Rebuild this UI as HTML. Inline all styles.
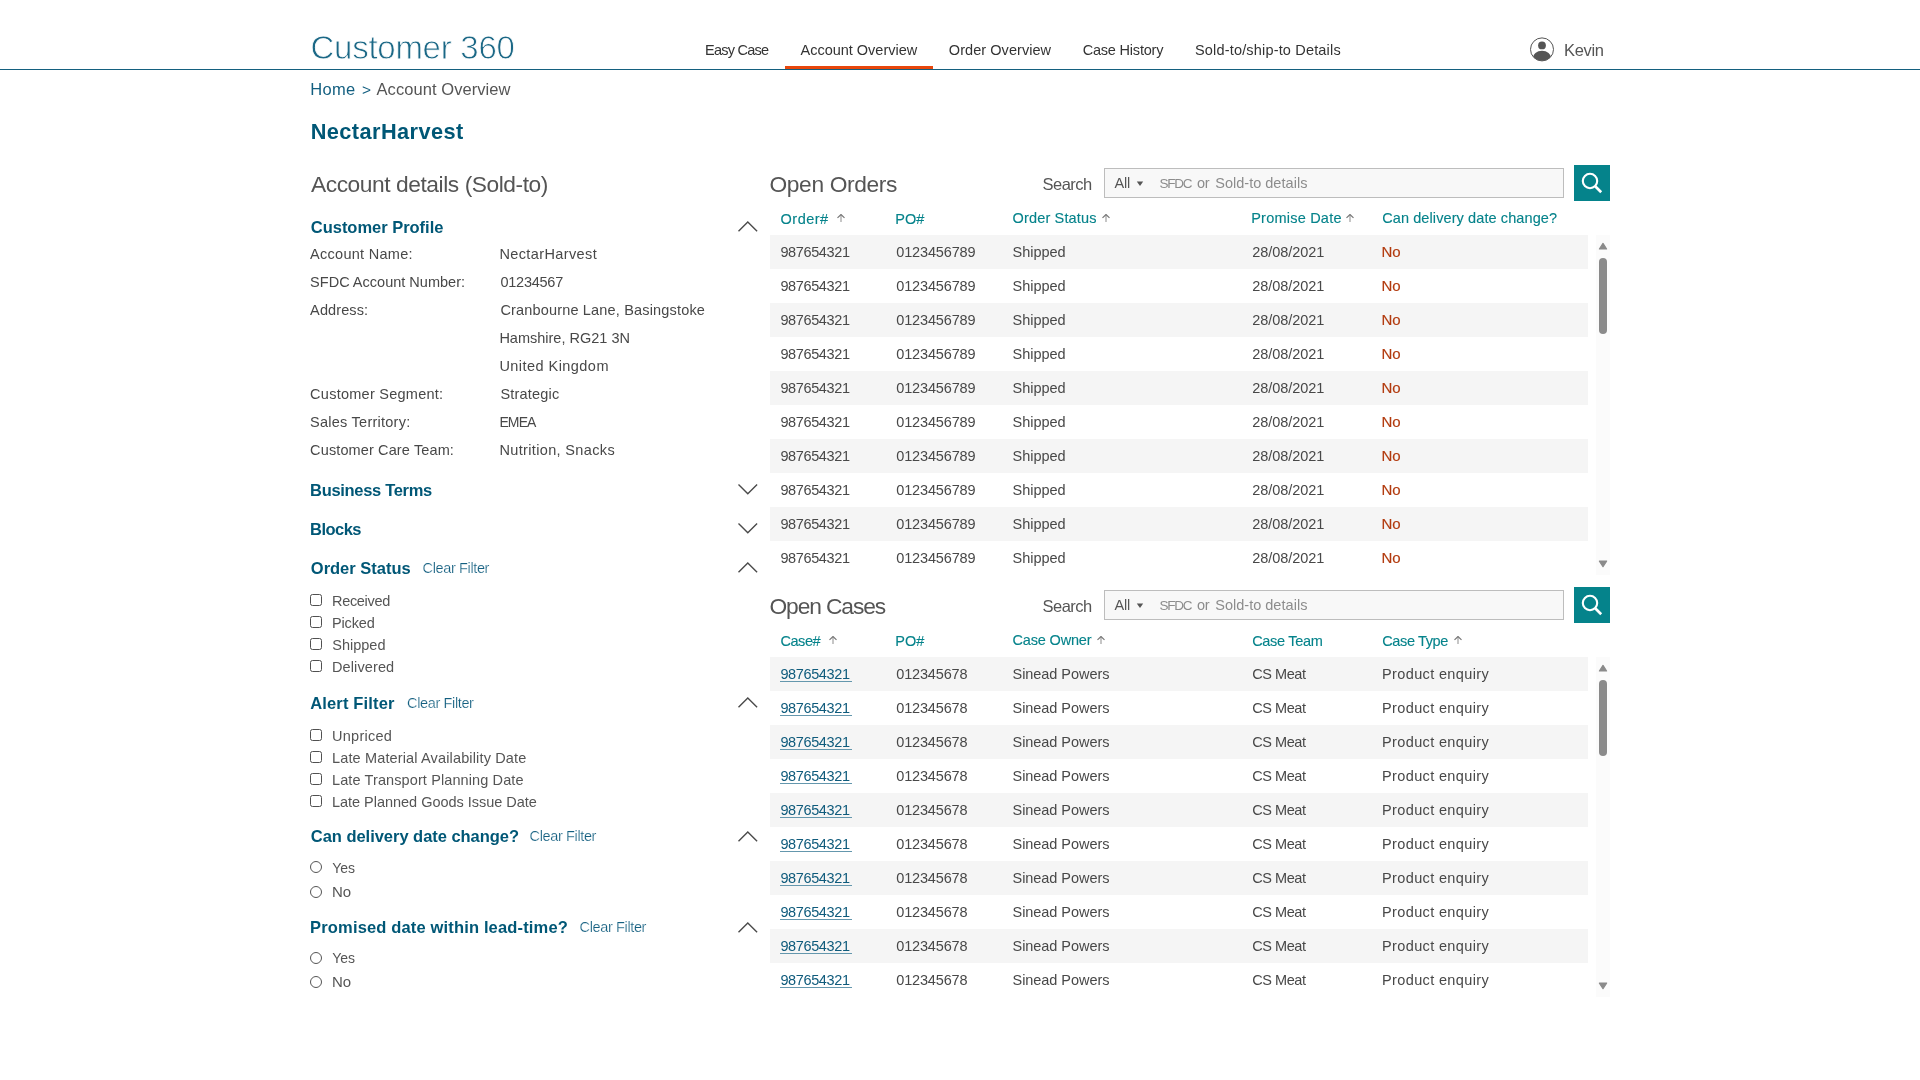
<!DOCTYPE html>
<html lang="en"><head><meta charset="utf-8"><title>Customer 360 - Account Overview</title>
<style>
html,body{margin:0;padding:0;background:#fff;}
body{width:1920px;height:1080px;position:relative;overflow:hidden;font-family:"Liberation Sans", sans-serif;will-change:transform;}
.t{position:absolute;white-space:pre;font-family:"Liberation Sans", sans-serif;}
.b{position:absolute;display:block;}
</style></head><body>
<div class="b" style="left:0px;top:69px;width:1920px;height:1px;background:#14607f;"></div>
<div class="b" style="left:785px;top:66px;width:148px;height:3px;background:#e8470c;"></div>
<div class="b" style="left:770px;top:235px;width:818px;height:34px;background:#f5f5f5;"></div>
<div class="b" style="left:770px;top:303px;width:818px;height:34px;background:#f5f5f5;"></div>
<div class="b" style="left:770px;top:371px;width:818px;height:34px;background:#f5f5f5;"></div>
<div class="b" style="left:770px;top:439px;width:818px;height:34px;background:#f5f5f5;"></div>
<div class="b" style="left:770px;top:507px;width:818px;height:34px;background:#f5f5f5;"></div>
<div class="b" style="left:1596px;top:235px;width:14px;height:340px;background:#fbfbfb;"></div>
<div class="b" style="left:1599px;top:258px;width:8px;height:76px;background:#8a8a8a;border-radius:4px;"></div>
<svg class="b" style="left:1598px;top:242px" width="10" height="8" viewBox="0 0 10 8"><path d="M5 1.4 L8.6 7 H1.4 Z" fill="#8a8a8a" stroke="#8a8a8a" stroke-width="1.2" stroke-linejoin="round"/></svg>
<svg class="b" style="left:1598px;top:560px" width="10" height="8" viewBox="0 0 10 8"><path d="M5 6.7 L8.6 1.1 H1.4 Z" fill="#8a8a8a" stroke="#8a8a8a" stroke-width="1.2" stroke-linejoin="round"/></svg>
<div class="b" style="left:770px;top:657px;width:818px;height:34px;background:#f5f5f5;"></div>
<div class="b" style="left:770px;top:725px;width:818px;height:34px;background:#f5f5f5;"></div>
<div class="b" style="left:770px;top:793px;width:818px;height:34px;background:#f5f5f5;"></div>
<div class="b" style="left:770px;top:861px;width:818px;height:34px;background:#f5f5f5;"></div>
<div class="b" style="left:770px;top:929px;width:818px;height:34px;background:#f5f5f5;"></div>
<div class="b" style="left:1596px;top:657px;width:14px;height:340px;background:#fbfbfb;"></div>
<div class="b" style="left:1599px;top:680px;width:8px;height:76px;background:#8a8a8a;border-radius:4px;"></div>
<svg class="b" style="left:1598px;top:664px" width="10" height="8" viewBox="0 0 10 8"><path d="M5 1.4 L8.6 7 H1.4 Z" fill="#8a8a8a" stroke="#8a8a8a" stroke-width="1.2" stroke-linejoin="round"/></svg>
<svg class="b" style="left:1598px;top:982px" width="10" height="8" viewBox="0 0 10 8"><path d="M5 6.7 L8.6 1.1 H1.4 Z" fill="#8a8a8a" stroke="#8a8a8a" stroke-width="1.2" stroke-linejoin="round"/></svg>
<div class="b" style="left:1104px;top:168px;width:460px;height:30px;box-sizing:border-box;border:1px solid #bdbdbd;background:#f8f8f8;"></div>
<svg class="b" style="left:1136px;top:181px" width="8" height="6" viewBox="0 0 8 6"><path d="M0.8 0.5 H7.2 L4 5 Z" fill="#555"/></svg>
<div class="b" style="left:1574px;top:165px;width:36px;height:36px;background:#05838b;"></div>
<svg class="b" style="left:1574px;top:165px" width="36" height="36" viewBox="0 0 36 36"><circle cx="16" cy="16" r="7.2" fill="none" stroke="#fff" stroke-width="2.1"/><path d="M21.2 21.2 L27.2 27.2" stroke="#fff" stroke-width="2.7" stroke-linecap="butt"/></svg>
<div class="b" style="left:1104px;top:590px;width:460px;height:30px;box-sizing:border-box;border:1px solid #bdbdbd;background:#f8f8f8;"></div>
<svg class="b" style="left:1136px;top:603px" width="8" height="6" viewBox="0 0 8 6"><path d="M0.8 0.5 H7.2 L4 5 Z" fill="#555"/></svg>
<div class="b" style="left:1574px;top:587px;width:36px;height:36px;background:#05838b;"></div>
<svg class="b" style="left:1574px;top:587px" width="36" height="36" viewBox="0 0 36 36"><circle cx="16" cy="16" r="7.2" fill="none" stroke="#fff" stroke-width="2.1"/><path d="M21.2 21.2 L27.2 27.2" stroke="#fff" stroke-width="2.7" stroke-linecap="butt"/></svg>
<div class="b" style="left:310px;top:594px;width:12px;height:12px;box-sizing:border-box;border:1px solid #505050;border-radius:2.5px;background:#fff;"></div>
<div class="b" style="left:310px;top:616px;width:12px;height:12px;box-sizing:border-box;border:1px solid #505050;border-radius:2.5px;background:#fff;"></div>
<div class="b" style="left:310px;top:638px;width:12px;height:12px;box-sizing:border-box;border:1px solid #505050;border-radius:2.5px;background:#fff;"></div>
<div class="b" style="left:310px;top:660px;width:12px;height:12px;box-sizing:border-box;border:1px solid #505050;border-radius:2.5px;background:#fff;"></div>
<div class="b" style="left:310px;top:729px;width:12px;height:12px;box-sizing:border-box;border:1px solid #505050;border-radius:2.5px;background:#fff;"></div>
<div class="b" style="left:310px;top:751px;width:12px;height:12px;box-sizing:border-box;border:1px solid #505050;border-radius:2.5px;background:#fff;"></div>
<div class="b" style="left:310px;top:773px;width:12px;height:12px;box-sizing:border-box;border:1px solid #505050;border-radius:2.5px;background:#fff;"></div>
<div class="b" style="left:310px;top:795px;width:12px;height:12px;box-sizing:border-box;border:1px solid #505050;border-radius:2.5px;background:#fff;"></div>
<div class="b" style="left:310px;top:861px;width:12px;height:12px;box-sizing:border-box;border:1px solid #555;border-radius:50%;background:#fff;"></div>
<div class="b" style="left:310px;top:886px;width:12px;height:12px;box-sizing:border-box;border:1px solid #555;border-radius:50%;background:#fff;"></div>
<div class="b" style="left:310px;top:952px;width:12px;height:12px;box-sizing:border-box;border:1px solid #555;border-radius:50%;background:#fff;"></div>
<div class="b" style="left:310px;top:976px;width:12px;height:12px;box-sizing:border-box;border:1px solid #555;border-radius:50%;background:#fff;"></div>
<svg class="b" style="left:738px;top:221px" width="20" height="11" viewBox="0 0 20 11"><path d="M0.5 10.3 L9.8 1.1 L19.1 10.3" fill="none" stroke="#4a4a4a" stroke-width="1.4"/></svg>
<svg class="b" style="left:738px;top:484px" width="20" height="11" viewBox="0 0 20 11"><path d="M0.5 0.6 L9.8 9.8 L19.1 0.6" fill="none" stroke="#4a4a4a" stroke-width="1.4"/></svg>
<svg class="b" style="left:738px;top:523px" width="20" height="11" viewBox="0 0 20 11"><path d="M0.5 0.6 L9.8 9.8 L19.1 0.6" fill="none" stroke="#4a4a4a" stroke-width="1.4"/></svg>
<svg class="b" style="left:738px;top:562px" width="20" height="11" viewBox="0 0 20 11"><path d="M0.5 10.3 L9.8 1.1 L19.1 10.3" fill="none" stroke="#4a4a4a" stroke-width="1.4"/></svg>
<svg class="b" style="left:738px;top:697px" width="20" height="11" viewBox="0 0 20 11"><path d="M0.5 10.3 L9.8 1.1 L19.1 10.3" fill="none" stroke="#4a4a4a" stroke-width="1.4"/></svg>
<svg class="b" style="left:738px;top:831px" width="20" height="11" viewBox="0 0 20 11"><path d="M0.5 10.3 L9.8 1.1 L19.1 10.3" fill="none" stroke="#4a4a4a" stroke-width="1.4"/></svg>
<svg class="b" style="left:738px;top:922px" width="20" height="11" viewBox="0 0 20 11"><path d="M0.5 10.3 L9.8 1.1 L19.1 10.3" fill="none" stroke="#4a4a4a" stroke-width="1.4"/></svg>
<svg class="b" style="left:837px;top:214px" width="8" height="9" viewBox="0 0 8 9"><path d="M4 8 V0.8" fill="none" stroke="#a0a0a0" stroke-width="1.2"/><path d="M0.5 3.9 L4 0.5 L7.5 3.9" fill="none" stroke="#777" stroke-width="1.2"/></svg>
<svg class="b" style="left:1101.5px;top:214px" width="8" height="9" viewBox="0 0 8 9"><path d="M4 8 V0.8" fill="none" stroke="#a0a0a0" stroke-width="1.2"/><path d="M0.5 3.9 L4 0.5 L7.5 3.9" fill="none" stroke="#777" stroke-width="1.2"/></svg>
<svg class="b" style="left:1346px;top:214px" width="8" height="9" viewBox="0 0 8 9"><path d="M4 8 V0.8" fill="none" stroke="#a0a0a0" stroke-width="1.2"/><path d="M0.5 3.9 L4 0.5 L7.5 3.9" fill="none" stroke="#777" stroke-width="1.2"/></svg>
<svg class="b" style="left:828.5px;top:636px" width="8" height="9" viewBox="0 0 8 9"><path d="M4 8 V0.8" fill="none" stroke="#a0a0a0" stroke-width="1.2"/><path d="M0.5 3.9 L4 0.5 L7.5 3.9" fill="none" stroke="#777" stroke-width="1.2"/></svg>
<svg class="b" style="left:1097.3px;top:636px" width="8" height="9" viewBox="0 0 8 9"><path d="M4 8 V0.8" fill="none" stroke="#a0a0a0" stroke-width="1.2"/><path d="M0.5 3.9 L4 0.5 L7.5 3.9" fill="none" stroke="#777" stroke-width="1.2"/></svg>
<svg class="b" style="left:1454px;top:636px" width="8" height="9" viewBox="0 0 8 9"><path d="M4 8 V0.8" fill="none" stroke="#a0a0a0" stroke-width="1.2"/><path d="M0.5 3.9 L4 0.5 L7.5 3.9" fill="none" stroke="#777" stroke-width="1.2"/></svg>
<svg class="b" style="left:1529px;top:37px" width="26" height="26" viewBox="0 0 26 26"><defs><clipPath id="uc"><circle cx="13" cy="12.4" r="11.3"/></clipPath></defs><circle cx="13" cy="12.4" r="11.5" fill="#fff" stroke="#555" stroke-width="1"/><circle cx="13" cy="8.4" r="3.9" fill="#555"/><ellipse cx="13" cy="21.3" rx="9.3" ry="7.6" fill="#555" clip-path="url(#uc)"/></svg>
<span class="t" style="left:310.50px;top:29.00px;font-size:33.0px;line-height:37px;color:#1b6886;letter-spacing:-0.265px;-webkit-text-stroke:0.8px #fff;">Customer 360</span>
<span class="t" style="left:705.00px;top:42.00px;font-size:14.5px;line-height:16px;color:#333333;letter-spacing:-0.756px;">Easy Case</span>
<span class="t" style="left:800.50px;top:42.00px;font-size:14.5px;line-height:16px;color:#333333;letter-spacing:-0.012px;">Account Overview</span>
<span class="t" style="left:948.80px;top:42.00px;font-size:14.5px;line-height:16px;color:#333333;letter-spacing:0.058px;">Order Overview</span>
<span class="t" style="left:1082.70px;top:42.00px;font-size:14.5px;line-height:16px;color:#333333;letter-spacing:-0.204px;">Case History</span>
<span class="t" style="left:1195.00px;top:42.00px;font-size:14.5px;line-height:16px;color:#333333;letter-spacing:0.173px;">Sold-to/ship-to Details</span>
<span class="t" style="left:1564.00px;top:40.50px;font-size:16.5px;line-height:18px;color:#555555;letter-spacing:-0.337px;">Kevin</span>
<span class="t" style="left:310.25px;top:79.75px;font-size:16.5px;line-height:18px;color:#135f80;letter-spacing:0.304px;">Home</span>
<span class="t" style="left:361.90px;top:80.75px;font-size:15.5px;line-height:17px;color:#135f80;">&gt;</span>
<span class="t" style="left:376.50px;top:79.75px;font-size:16.5px;line-height:18px;color:#555555;letter-spacing:0.070px;">Account Overview</span>
<span class="t" style="left:310.70px;top:119.00px;font-size:21.75px;line-height:25px;color:#005776;font-weight:700;letter-spacing:0.420px;">NectarHarvest</span>
<span class="t" style="left:311.00px;top:171.00px;font-size:22.75px;line-height:26px;color:#555555;letter-spacing:-0.436px;">Account details (Sold-to)</span>
<span class="t" style="left:769.50px;top:171.00px;font-size:22.75px;line-height:26px;color:#555555;letter-spacing:-0.363px;">Open Orders</span>
<span class="t" style="left:769.50px;top:593.00px;font-size:22.75px;line-height:26px;color:#555555;letter-spacing:-1.093px;">Open Cases</span>
<span class="t" style="left:310.80px;top:218.00px;font-size:16.5px;line-height:18px;color:#005776;font-weight:700;letter-spacing:-0.024px;">Customer Profile</span>
<span class="t" style="left:310.10px;top:481.00px;font-size:16.5px;line-height:18px;color:#005776;font-weight:700;letter-spacing:-0.321px;">Business Terms</span>
<span class="t" style="left:310.10px;top:520.00px;font-size:16.5px;line-height:18px;color:#005776;font-weight:700;letter-spacing:-0.546px;">Blocks</span>
<span class="t" style="left:310.80px;top:559.00px;font-size:16.5px;line-height:18px;color:#005776;font-weight:700;letter-spacing:-0.006px;">Order Status</span>
<span class="t" style="left:422.60px;top:560.00px;font-size:14.5px;line-height:16px;color:#135f80;letter-spacing:-0.370px;-webkit-text-stroke:0.22px #fff;">Clear Filter</span>
<span class="t" style="left:310.20px;top:694.00px;font-size:16.5px;line-height:18px;color:#005776;font-weight:700;letter-spacing:0.155px;">Alert Filter</span>
<span class="t" style="left:407.10px;top:695.00px;font-size:14.5px;line-height:16px;color:#135f80;letter-spacing:-0.370px;-webkit-text-stroke:0.22px #fff;">Clear Filter</span>
<span class="t" style="left:310.80px;top:827.00px;font-size:16.5px;line-height:18px;color:#005776;font-weight:700;letter-spacing:-0.033px;">Can delivery date change?</span>
<span class="t" style="left:529.60px;top:828.00px;font-size:14.5px;line-height:16px;color:#135f80;letter-spacing:-0.370px;-webkit-text-stroke:0.22px #fff;">Clear Filter</span>
<span class="t" style="left:310.10px;top:918.00px;font-size:16.5px;line-height:18px;color:#005776;font-weight:700;letter-spacing:0.155px;">Promised date within lead-time?</span>
<span class="t" style="left:579.60px;top:919.00px;font-size:14.5px;line-height:16px;color:#135f80;letter-spacing:-0.370px;-webkit-text-stroke:0.22px #fff;">Clear Filter</span>
<span class="t" style="left:310.10px;top:246.00px;font-size:14.5px;line-height:16px;color:#484848;letter-spacing:0.275px;">Account Name:</span>
<span class="t" style="left:499.40px;top:246.00px;font-size:14.5px;line-height:16px;color:#484848;letter-spacing:0.389px;">NectarHarvest</span>
<span class="t" style="left:310.10px;top:274.00px;font-size:14.5px;line-height:16px;color:#484848;letter-spacing:0.011px;">SFDC Account Number:</span>
<span class="t" style="left:500.40px;top:274.00px;font-size:14.5px;line-height:16px;color:#484848;letter-spacing:-0.236px;">01234567</span>
<span class="t" style="left:310.10px;top:302.00px;font-size:14.5px;line-height:16px;color:#484848;letter-spacing:0.115px;">Address:</span>
<span class="t" style="left:500.40px;top:302.00px;font-size:14.5px;line-height:16px;color:#484848;letter-spacing:0.169px;">Cranbourne Lane, Basingstoke</span>
<span class="t" style="left:499.40px;top:330.00px;font-size:14.5px;line-height:16px;color:#484848;">Hamshire, RG21 3N</span>
<span class="t" style="left:499.40px;top:358.00px;font-size:14.5px;line-height:16px;color:#484848;letter-spacing:0.454px;">United Kingdom</span>
<span class="t" style="left:310.10px;top:386.00px;font-size:14.5px;line-height:16px;color:#484848;letter-spacing:0.255px;">Customer Segment:</span>
<span class="t" style="left:500.40px;top:386.00px;font-size:14.5px;line-height:16px;color:#484848;letter-spacing:0.204px;">Strategic</span>
<span class="t" style="left:310.10px;top:414.00px;font-size:14.5px;line-height:16px;color:#484848;letter-spacing:0.242px;">Sales Territory:</span>
<span class="t" style="left:499.40px;top:414.00px;font-size:14.0px;line-height:16px;color:#484848;letter-spacing:-0.879px;">EMEA</span>
<span class="t" style="left:310.10px;top:442.00px;font-size:14.5px;line-height:16px;color:#484848;letter-spacing:0.123px;">Customer Care Team:</span>
<span class="t" style="left:499.40px;top:442.00px;font-size:14.5px;line-height:16px;color:#484848;letter-spacing:0.353px;">Nutrition, Snacks</span>
<span class="t" style="left:332.00px;top:593.00px;font-size:14.5px;line-height:16px;color:#555555;letter-spacing:-0.312px;">Received</span>
<span class="t" style="left:332.00px;top:615.00px;font-size:14.5px;line-height:16px;color:#555555;letter-spacing:-0.151px;">Picked</span>
<span class="t" style="left:332.30px;top:637.00px;font-size:14.5px;line-height:16px;color:#555555;letter-spacing:-0.008px;">Shipped</span>
<span class="t" style="left:332.00px;top:659.00px;font-size:14.5px;line-height:16px;color:#555555;letter-spacing:0.114px;">Delivered</span>
<span class="t" style="left:332.00px;top:728.00px;font-size:14.5px;line-height:16px;color:#555555;letter-spacing:0.262px;">Unpriced</span>
<span class="t" style="left:332.00px;top:750.00px;font-size:14.5px;line-height:16px;color:#555555;letter-spacing:0.144px;">Late Material Availability Date</span>
<span class="t" style="left:332.00px;top:772.00px;font-size:14.5px;line-height:16px;color:#555555;letter-spacing:0.107px;">Late Transport Planning Date</span>
<span class="t" style="left:332.00px;top:794.00px;font-size:14.5px;line-height:16px;color:#555555;letter-spacing:-0.028px;">Late Planned Goods Issue Date</span>
<span class="t" style="left:332.20px;top:859.80px;font-size:14.0px;line-height:16px;color:#555555;">Yes</span>
<span class="t" style="left:331.90px;top:882.80px;font-size:15.0px;line-height:17px;color:#555555;">No</span>
<span class="t" style="left:332.20px;top:950.30px;font-size:14.0px;line-height:16px;color:#555555;">Yes</span>
<span class="t" style="left:331.90px;top:973.30px;font-size:15.0px;line-height:17px;color:#555555;">No</span>
<span class="t" style="left:1042.50px;top:175.00px;font-size:16.5px;line-height:18px;color:#555555;letter-spacing:-0.521px;">Search</span>
<span class="t" style="left:1114.40px;top:175.10px;font-size:14.5px;line-height:16px;color:#555555;letter-spacing:-0.146px;">All</span>
<span class="t" style="left:1159.40px;top:176.10px;font-size:13.5px;line-height:15px;color:#8c8c8c;letter-spacing:-1.233px;">SFDC</span>
<span class="t" style="left:1196.90px;top:175.10px;font-size:14.5px;line-height:16px;color:#8c8c8c;letter-spacing:-0.264px;">or</span>
<span class="t" style="left:1215.20px;top:175.10px;font-size:14.5px;line-height:16px;color:#8c8c8c;letter-spacing:0.020px;">Sold-to</span>
<span class="t" style="left:1265.20px;top:175.10px;font-size:14.5px;line-height:16px;color:#8c8c8c;letter-spacing:0.073px;">details</span>
<span class="t" style="left:1042.50px;top:597.00px;font-size:16.5px;line-height:18px;color:#555555;letter-spacing:-0.521px;">Search</span>
<span class="t" style="left:1114.40px;top:597.10px;font-size:14.5px;line-height:16px;color:#555555;letter-spacing:-0.146px;">All</span>
<span class="t" style="left:1159.40px;top:598.10px;font-size:13.5px;line-height:15px;color:#8c8c8c;letter-spacing:-1.233px;">SFDC</span>
<span class="t" style="left:1196.90px;top:597.10px;font-size:14.5px;line-height:16px;color:#8c8c8c;letter-spacing:-0.264px;">or</span>
<span class="t" style="left:1215.20px;top:597.10px;font-size:14.5px;line-height:16px;color:#8c8c8c;letter-spacing:0.020px;">Sold-to</span>
<span class="t" style="left:1265.20px;top:597.10px;font-size:14.5px;line-height:16px;color:#8c8c8c;letter-spacing:0.073px;">details</span>
<span class="t" style="left:780.60px;top:211.00px;font-size:14.5px;line-height:16px;color:#05838b;letter-spacing:0.467px;-webkit-text-stroke:0.12px #05838b;">Order#</span>
<span class="t" style="left:895.25px;top:211.00px;font-size:14.5px;line-height:16px;color:#05838b;letter-spacing:0.025px;-webkit-text-stroke:0.12px #05838b;">PO#</span>
<span class="t" style="left:1012.50px;top:210.00px;font-size:14.5px;line-height:16px;color:#05838b;letter-spacing:0.164px;-webkit-text-stroke:0.12px #05838b;">Order Status</span>
<span class="t" style="left:1251.20px;top:210.00px;font-size:14.5px;line-height:16px;color:#05838b;letter-spacing:0.221px;-webkit-text-stroke:0.12px #05838b;">Promise Date</span>
<span class="t" style="left:1382.20px;top:210.00px;font-size:14.5px;line-height:16px;color:#05838b;letter-spacing:0.098px;-webkit-text-stroke:0.12px #05838b;">Can delivery date change?</span>
<span class="t" style="left:780.50px;top:633.00px;font-size:14.5px;line-height:16px;color:#05838b;letter-spacing:-0.462px;-webkit-text-stroke:0.12px #05838b;">Case#</span>
<span class="t" style="left:895.25px;top:633.00px;font-size:14.5px;line-height:16px;color:#05838b;letter-spacing:0.025px;-webkit-text-stroke:0.12px #05838b;">PO#</span>
<span class="t" style="left:1012.50px;top:632.00px;font-size:14.5px;line-height:16px;color:#05838b;letter-spacing:-0.167px;-webkit-text-stroke:0.12px #05838b;">Case Owner</span>
<span class="t" style="left:1252.20px;top:633.00px;font-size:14.5px;line-height:16px;color:#05838b;letter-spacing:-0.307px;-webkit-text-stroke:0.12px #05838b;">Case Team</span>
<span class="t" style="left:1382.20px;top:633.00px;font-size:14.5px;line-height:16px;color:#05838b;letter-spacing:-0.356px;-webkit-text-stroke:0.12px #05838b;">Case Type</span>
<span class="t" style="left:780.40px;top:244.00px;font-size:14.5px;line-height:16px;color:#484848;letter-spacing:-0.377px;">987654321</span>
<span class="t" style="left:896.25px;top:244.00px;font-size:14.5px;line-height:16px;color:#484848;letter-spacing:-0.148px;">0123456789</span>
<span class="t" style="left:1012.50px;top:244.00px;font-size:14.5px;line-height:16px;color:#484848;letter-spacing:-0.025px;">Shipped</span>
<span class="t" style="left:1252.25px;top:244.00px;font-size:14.5px;line-height:16px;color:#484848;letter-spacing:-0.045px;">28/08/2021</span>
<span class="t" style="left:1381.40px;top:243.00px;font-size:15.0px;line-height:17px;color:#b23a0e;-webkit-text-stroke:0.15px #b23a0e;">No</span>
<span class="t" style="left:780.40px;top:278.00px;font-size:14.5px;line-height:16px;color:#484848;letter-spacing:-0.377px;">987654321</span>
<span class="t" style="left:896.25px;top:278.00px;font-size:14.5px;line-height:16px;color:#484848;letter-spacing:-0.148px;">0123456789</span>
<span class="t" style="left:1012.50px;top:278.00px;font-size:14.5px;line-height:16px;color:#484848;letter-spacing:-0.025px;">Shipped</span>
<span class="t" style="left:1252.25px;top:278.00px;font-size:14.5px;line-height:16px;color:#484848;letter-spacing:-0.045px;">28/08/2021</span>
<span class="t" style="left:1381.40px;top:277.00px;font-size:15.0px;line-height:17px;color:#b23a0e;-webkit-text-stroke:0.15px #b23a0e;">No</span>
<span class="t" style="left:780.40px;top:312.00px;font-size:14.5px;line-height:16px;color:#484848;letter-spacing:-0.377px;">987654321</span>
<span class="t" style="left:896.25px;top:312.00px;font-size:14.5px;line-height:16px;color:#484848;letter-spacing:-0.148px;">0123456789</span>
<span class="t" style="left:1012.50px;top:312.00px;font-size:14.5px;line-height:16px;color:#484848;letter-spacing:-0.025px;">Shipped</span>
<span class="t" style="left:1252.25px;top:312.00px;font-size:14.5px;line-height:16px;color:#484848;letter-spacing:-0.045px;">28/08/2021</span>
<span class="t" style="left:1381.40px;top:311.00px;font-size:15.0px;line-height:17px;color:#b23a0e;-webkit-text-stroke:0.15px #b23a0e;">No</span>
<span class="t" style="left:780.40px;top:346.00px;font-size:14.5px;line-height:16px;color:#484848;letter-spacing:-0.377px;">987654321</span>
<span class="t" style="left:896.25px;top:346.00px;font-size:14.5px;line-height:16px;color:#484848;letter-spacing:-0.148px;">0123456789</span>
<span class="t" style="left:1012.50px;top:346.00px;font-size:14.5px;line-height:16px;color:#484848;letter-spacing:-0.025px;">Shipped</span>
<span class="t" style="left:1252.25px;top:346.00px;font-size:14.5px;line-height:16px;color:#484848;letter-spacing:-0.045px;">28/08/2021</span>
<span class="t" style="left:1381.40px;top:345.00px;font-size:15.0px;line-height:17px;color:#b23a0e;-webkit-text-stroke:0.15px #b23a0e;">No</span>
<span class="t" style="left:780.40px;top:380.00px;font-size:14.5px;line-height:16px;color:#484848;letter-spacing:-0.377px;">987654321</span>
<span class="t" style="left:896.25px;top:380.00px;font-size:14.5px;line-height:16px;color:#484848;letter-spacing:-0.148px;">0123456789</span>
<span class="t" style="left:1012.50px;top:380.00px;font-size:14.5px;line-height:16px;color:#484848;letter-spacing:-0.025px;">Shipped</span>
<span class="t" style="left:1252.25px;top:380.00px;font-size:14.5px;line-height:16px;color:#484848;letter-spacing:-0.045px;">28/08/2021</span>
<span class="t" style="left:1381.40px;top:379.00px;font-size:15.0px;line-height:17px;color:#b23a0e;-webkit-text-stroke:0.15px #b23a0e;">No</span>
<span class="t" style="left:780.40px;top:414.00px;font-size:14.5px;line-height:16px;color:#484848;letter-spacing:-0.377px;">987654321</span>
<span class="t" style="left:896.25px;top:414.00px;font-size:14.5px;line-height:16px;color:#484848;letter-spacing:-0.148px;">0123456789</span>
<span class="t" style="left:1012.50px;top:414.00px;font-size:14.5px;line-height:16px;color:#484848;letter-spacing:-0.025px;">Shipped</span>
<span class="t" style="left:1252.25px;top:414.00px;font-size:14.5px;line-height:16px;color:#484848;letter-spacing:-0.045px;">28/08/2021</span>
<span class="t" style="left:1381.40px;top:413.00px;font-size:15.0px;line-height:17px;color:#b23a0e;-webkit-text-stroke:0.15px #b23a0e;">No</span>
<span class="t" style="left:780.40px;top:448.00px;font-size:14.5px;line-height:16px;color:#484848;letter-spacing:-0.377px;">987654321</span>
<span class="t" style="left:896.25px;top:448.00px;font-size:14.5px;line-height:16px;color:#484848;letter-spacing:-0.148px;">0123456789</span>
<span class="t" style="left:1012.50px;top:448.00px;font-size:14.5px;line-height:16px;color:#484848;letter-spacing:-0.025px;">Shipped</span>
<span class="t" style="left:1252.25px;top:448.00px;font-size:14.5px;line-height:16px;color:#484848;letter-spacing:-0.045px;">28/08/2021</span>
<span class="t" style="left:1381.40px;top:447.00px;font-size:15.0px;line-height:17px;color:#b23a0e;-webkit-text-stroke:0.15px #b23a0e;">No</span>
<span class="t" style="left:780.40px;top:482.00px;font-size:14.5px;line-height:16px;color:#484848;letter-spacing:-0.377px;">987654321</span>
<span class="t" style="left:896.25px;top:482.00px;font-size:14.5px;line-height:16px;color:#484848;letter-spacing:-0.148px;">0123456789</span>
<span class="t" style="left:1012.50px;top:482.00px;font-size:14.5px;line-height:16px;color:#484848;letter-spacing:-0.025px;">Shipped</span>
<span class="t" style="left:1252.25px;top:482.00px;font-size:14.5px;line-height:16px;color:#484848;letter-spacing:-0.045px;">28/08/2021</span>
<span class="t" style="left:1381.40px;top:481.00px;font-size:15.0px;line-height:17px;color:#b23a0e;-webkit-text-stroke:0.15px #b23a0e;">No</span>
<span class="t" style="left:780.40px;top:516.00px;font-size:14.5px;line-height:16px;color:#484848;letter-spacing:-0.377px;">987654321</span>
<span class="t" style="left:896.25px;top:516.00px;font-size:14.5px;line-height:16px;color:#484848;letter-spacing:-0.148px;">0123456789</span>
<span class="t" style="left:1012.50px;top:516.00px;font-size:14.5px;line-height:16px;color:#484848;letter-spacing:-0.025px;">Shipped</span>
<span class="t" style="left:1252.25px;top:516.00px;font-size:14.5px;line-height:16px;color:#484848;letter-spacing:-0.045px;">28/08/2021</span>
<span class="t" style="left:1381.40px;top:515.00px;font-size:15.0px;line-height:17px;color:#b23a0e;-webkit-text-stroke:0.15px #b23a0e;">No</span>
<span class="t" style="left:780.40px;top:550.00px;font-size:14.5px;line-height:16px;color:#484848;letter-spacing:-0.377px;">987654321</span>
<span class="t" style="left:896.25px;top:550.00px;font-size:14.5px;line-height:16px;color:#484848;letter-spacing:-0.148px;">0123456789</span>
<span class="t" style="left:1012.50px;top:550.00px;font-size:14.5px;line-height:16px;color:#484848;letter-spacing:-0.025px;">Shipped</span>
<span class="t" style="left:1252.25px;top:550.00px;font-size:14.5px;line-height:16px;color:#484848;letter-spacing:-0.045px;">28/08/2021</span>
<span class="t" style="left:1381.40px;top:549.00px;font-size:15.0px;line-height:17px;color:#b23a0e;-webkit-text-stroke:0.15px #b23a0e;">No</span>
<span class="t" style="left:780.40px;top:666.00px;font-size:14.5px;line-height:16px;color:#0f5b7c;letter-spacing:-0.377px;background:linear-gradient(#6497ad,#6497ad) left bottom/100% 1px no-repeat;padding-right:2.6px;">987654321</span>
<span class="t" style="left:896.25px;top:666.00px;font-size:14.5px;line-height:16px;color:#484848;letter-spacing:-0.158px;">012345678</span>
<span class="t" style="left:1012.50px;top:666.00px;font-size:14.5px;line-height:16px;color:#484848;letter-spacing:-0.044px;">Sinead Powers</span>
<span class="t" style="left:1252.20px;top:666.00px;font-size:14.5px;line-height:16px;color:#484848;letter-spacing:-0.446px;">CS Meat</span>
<span class="t" style="left:1382.10px;top:666.00px;font-size:14.5px;line-height:16px;color:#484848;letter-spacing:0.357px;">Product enquiry</span>
<span class="t" style="left:780.40px;top:700.00px;font-size:14.5px;line-height:16px;color:#0f5b7c;letter-spacing:-0.377px;background:linear-gradient(#6497ad,#6497ad) left bottom/100% 1px no-repeat;padding-right:2.6px;">987654321</span>
<span class="t" style="left:896.25px;top:700.00px;font-size:14.5px;line-height:16px;color:#484848;letter-spacing:-0.158px;">012345678</span>
<span class="t" style="left:1012.50px;top:700.00px;font-size:14.5px;line-height:16px;color:#484848;letter-spacing:-0.044px;">Sinead Powers</span>
<span class="t" style="left:1252.20px;top:700.00px;font-size:14.5px;line-height:16px;color:#484848;letter-spacing:-0.446px;">CS Meat</span>
<span class="t" style="left:1382.10px;top:700.00px;font-size:14.5px;line-height:16px;color:#484848;letter-spacing:0.357px;">Product enquiry</span>
<span class="t" style="left:780.40px;top:734.00px;font-size:14.5px;line-height:16px;color:#0f5b7c;letter-spacing:-0.377px;background:linear-gradient(#6497ad,#6497ad) left bottom/100% 1px no-repeat;padding-right:2.6px;">987654321</span>
<span class="t" style="left:896.25px;top:734.00px;font-size:14.5px;line-height:16px;color:#484848;letter-spacing:-0.158px;">012345678</span>
<span class="t" style="left:1012.50px;top:734.00px;font-size:14.5px;line-height:16px;color:#484848;letter-spacing:-0.044px;">Sinead Powers</span>
<span class="t" style="left:1252.20px;top:734.00px;font-size:14.5px;line-height:16px;color:#484848;letter-spacing:-0.446px;">CS Meat</span>
<span class="t" style="left:1382.10px;top:734.00px;font-size:14.5px;line-height:16px;color:#484848;letter-spacing:0.357px;">Product enquiry</span>
<span class="t" style="left:780.40px;top:768.00px;font-size:14.5px;line-height:16px;color:#0f5b7c;letter-spacing:-0.377px;background:linear-gradient(#6497ad,#6497ad) left bottom/100% 1px no-repeat;padding-right:2.6px;">987654321</span>
<span class="t" style="left:896.25px;top:768.00px;font-size:14.5px;line-height:16px;color:#484848;letter-spacing:-0.158px;">012345678</span>
<span class="t" style="left:1012.50px;top:768.00px;font-size:14.5px;line-height:16px;color:#484848;letter-spacing:-0.044px;">Sinead Powers</span>
<span class="t" style="left:1252.20px;top:768.00px;font-size:14.5px;line-height:16px;color:#484848;letter-spacing:-0.446px;">CS Meat</span>
<span class="t" style="left:1382.10px;top:768.00px;font-size:14.5px;line-height:16px;color:#484848;letter-spacing:0.357px;">Product enquiry</span>
<span class="t" style="left:780.40px;top:802.00px;font-size:14.5px;line-height:16px;color:#0f5b7c;letter-spacing:-0.377px;background:linear-gradient(#6497ad,#6497ad) left bottom/100% 1px no-repeat;padding-right:2.6px;">987654321</span>
<span class="t" style="left:896.25px;top:802.00px;font-size:14.5px;line-height:16px;color:#484848;letter-spacing:-0.158px;">012345678</span>
<span class="t" style="left:1012.50px;top:802.00px;font-size:14.5px;line-height:16px;color:#484848;letter-spacing:-0.044px;">Sinead Powers</span>
<span class="t" style="left:1252.20px;top:802.00px;font-size:14.5px;line-height:16px;color:#484848;letter-spacing:-0.446px;">CS Meat</span>
<span class="t" style="left:1382.10px;top:802.00px;font-size:14.5px;line-height:16px;color:#484848;letter-spacing:0.357px;">Product enquiry</span>
<span class="t" style="left:780.40px;top:836.00px;font-size:14.5px;line-height:16px;color:#0f5b7c;letter-spacing:-0.377px;background:linear-gradient(#6497ad,#6497ad) left bottom/100% 1px no-repeat;padding-right:2.6px;">987654321</span>
<span class="t" style="left:896.25px;top:836.00px;font-size:14.5px;line-height:16px;color:#484848;letter-spacing:-0.158px;">012345678</span>
<span class="t" style="left:1012.50px;top:836.00px;font-size:14.5px;line-height:16px;color:#484848;letter-spacing:-0.044px;">Sinead Powers</span>
<span class="t" style="left:1252.20px;top:836.00px;font-size:14.5px;line-height:16px;color:#484848;letter-spacing:-0.446px;">CS Meat</span>
<span class="t" style="left:1382.10px;top:836.00px;font-size:14.5px;line-height:16px;color:#484848;letter-spacing:0.357px;">Product enquiry</span>
<span class="t" style="left:780.40px;top:870.00px;font-size:14.5px;line-height:16px;color:#0f5b7c;letter-spacing:-0.377px;background:linear-gradient(#6497ad,#6497ad) left bottom/100% 1px no-repeat;padding-right:2.6px;">987654321</span>
<span class="t" style="left:896.25px;top:870.00px;font-size:14.5px;line-height:16px;color:#484848;letter-spacing:-0.158px;">012345678</span>
<span class="t" style="left:1012.50px;top:870.00px;font-size:14.5px;line-height:16px;color:#484848;letter-spacing:-0.044px;">Sinead Powers</span>
<span class="t" style="left:1252.20px;top:870.00px;font-size:14.5px;line-height:16px;color:#484848;letter-spacing:-0.446px;">CS Meat</span>
<span class="t" style="left:1382.10px;top:870.00px;font-size:14.5px;line-height:16px;color:#484848;letter-spacing:0.357px;">Product enquiry</span>
<span class="t" style="left:780.40px;top:904.00px;font-size:14.5px;line-height:16px;color:#0f5b7c;letter-spacing:-0.377px;background:linear-gradient(#6497ad,#6497ad) left bottom/100% 1px no-repeat;padding-right:2.6px;">987654321</span>
<span class="t" style="left:896.25px;top:904.00px;font-size:14.5px;line-height:16px;color:#484848;letter-spacing:-0.158px;">012345678</span>
<span class="t" style="left:1012.50px;top:904.00px;font-size:14.5px;line-height:16px;color:#484848;letter-spacing:-0.044px;">Sinead Powers</span>
<span class="t" style="left:1252.20px;top:904.00px;font-size:14.5px;line-height:16px;color:#484848;letter-spacing:-0.446px;">CS Meat</span>
<span class="t" style="left:1382.10px;top:904.00px;font-size:14.5px;line-height:16px;color:#484848;letter-spacing:0.357px;">Product enquiry</span>
<span class="t" style="left:780.40px;top:938.00px;font-size:14.5px;line-height:16px;color:#0f5b7c;letter-spacing:-0.377px;background:linear-gradient(#6497ad,#6497ad) left bottom/100% 1px no-repeat;padding-right:2.6px;">987654321</span>
<span class="t" style="left:896.25px;top:938.00px;font-size:14.5px;line-height:16px;color:#484848;letter-spacing:-0.158px;">012345678</span>
<span class="t" style="left:1012.50px;top:938.00px;font-size:14.5px;line-height:16px;color:#484848;letter-spacing:-0.044px;">Sinead Powers</span>
<span class="t" style="left:1252.20px;top:938.00px;font-size:14.5px;line-height:16px;color:#484848;letter-spacing:-0.446px;">CS Meat</span>
<span class="t" style="left:1382.10px;top:938.00px;font-size:14.5px;line-height:16px;color:#484848;letter-spacing:0.357px;">Product enquiry</span>
<span class="t" style="left:780.40px;top:972.00px;font-size:14.5px;line-height:16px;color:#0f5b7c;letter-spacing:-0.377px;background:linear-gradient(#6497ad,#6497ad) left bottom/100% 1px no-repeat;padding-right:2.6px;">987654321</span>
<span class="t" style="left:896.25px;top:972.00px;font-size:14.5px;line-height:16px;color:#484848;letter-spacing:-0.158px;">012345678</span>
<span class="t" style="left:1012.50px;top:972.00px;font-size:14.5px;line-height:16px;color:#484848;letter-spacing:-0.044px;">Sinead Powers</span>
<span class="t" style="left:1252.20px;top:972.00px;font-size:14.5px;line-height:16px;color:#484848;letter-spacing:-0.446px;">CS Meat</span>
<span class="t" style="left:1382.10px;top:972.00px;font-size:14.5px;line-height:16px;color:#484848;letter-spacing:0.357px;">Product enquiry</span>
</body></html>
